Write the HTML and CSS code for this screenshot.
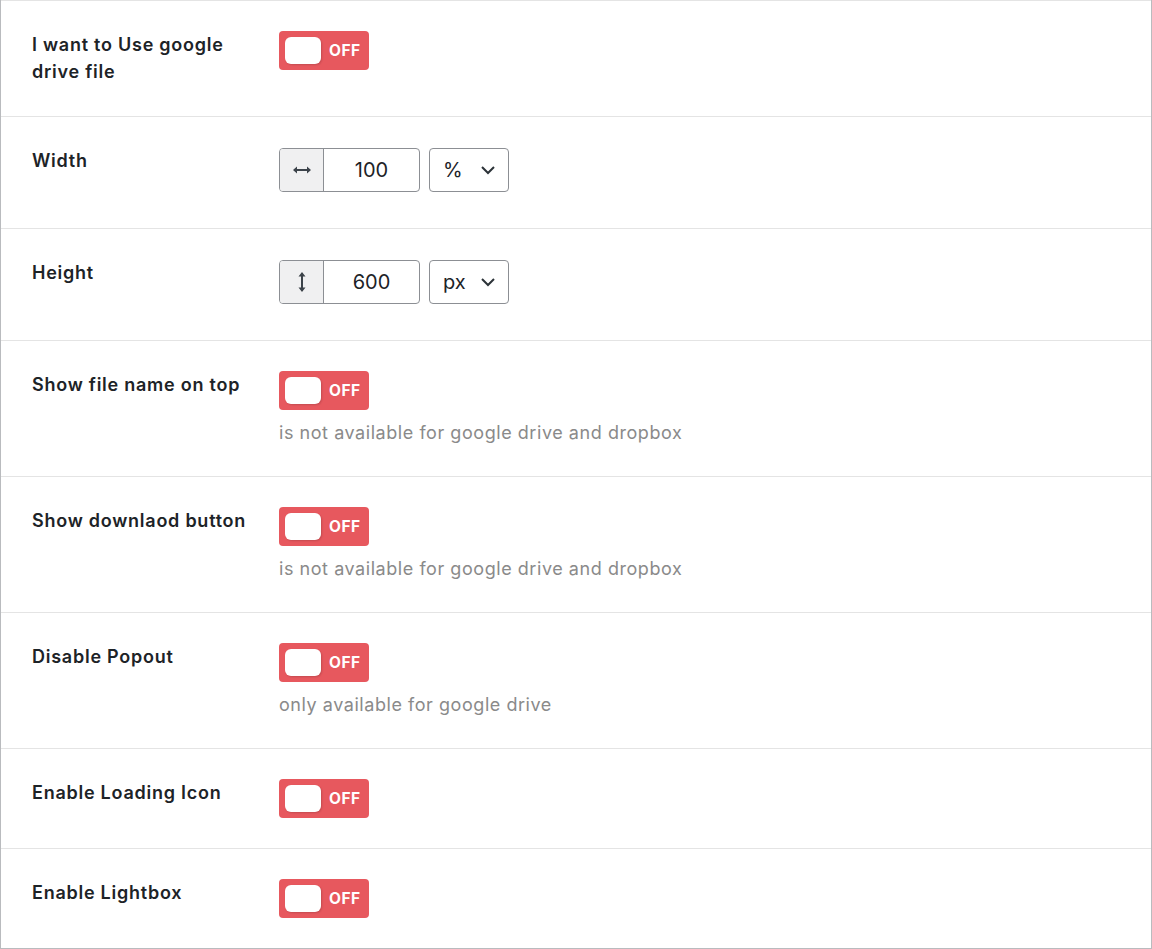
FILE: index.html
```html
<!DOCTYPE html>
<html>
<head>
<meta charset="utf-8">
<link rel="stylesheet" href="styles.css">
</head>
<body>
<div class="panel">
  <div class="row">
    <div class="label">I want to Use google drive file</div>
    <div class="control"><span class="toggle"><span class="knob"></span><span class="state">OFF</span></span></div>
  </div>
  <div class="row">
    <div class="label">Width</div>
    <div class="control dims">
      <div class="group">
        <span class="addon"><svg width="20" height="10" viewBox="0 0 20 10"><path d="M3 5h14" stroke="#3c434a" stroke-width="2"/><path d="M1 5l4-3.5v7z M19 5l-4-3.5v7z" fill="#3c434a"/></svg></span>
        <span class="value">100</span>
      </div>
      <div class="select"><span>%</span><svg class="chev" width="16" height="10" viewBox="0 0 16 10"><path d="M2 2l6 6 6-6" fill="none" stroke="#2c3338" stroke-width="2"/></svg></div>
    </div>
  </div>
  <div class="row">
    <div class="label">Height</div>
    <div class="control dims">
      <div class="group">
        <span class="addon"><svg width="10" height="22" viewBox="0 0 10 22"><path d="M5 3v16" stroke="#3c434a" stroke-width="2"/><path d="M5 1l3.5 4.5h-7z M5 21l3.5-4.5h-7z" fill="#3c434a"/></svg></span>
        <span class="value">600</span>
      </div>
      <div class="select"><span>px</span><svg class="chev" width="16" height="10" viewBox="0 0 16 10"><path d="M2 2l6 6 6-6" fill="none" stroke="#2c3338" stroke-width="2"/></svg></div>
    </div>
  </div>
  <div class="row">
    <div class="label">Show file name on top</div>
    <div class="control"><span class="toggle"><span class="knob"></span><span class="state">OFF</span></span>
      <p class="desc">is not available for google drive and dropbox</p></div>
  </div>
  <div class="row">
    <div class="label">Show downlaod button</div>
    <div class="control"><span class="toggle"><span class="knob"></span><span class="state">OFF</span></span>
      <p class="desc">is not available for google drive and dropbox</p></div>
  </div>
  <div class="row">
    <div class="label">Disable Popout</div>
    <div class="control"><span class="toggle"><span class="knob"></span><span class="state">OFF</span></span>
      <p class="desc">only available for google drive</p></div>
  </div>
  <div class="row">
    <div class="label">Enable Loading Icon</div>
    <div class="control"><span class="toggle"><span class="knob"></span><span class="state">OFF</span></span></div>
  </div>
  <div class="row">
    <div class="label">Enable Lightbox</div>
    <div class="control"><span class="toggle"><span class="knob"></span><span class="state">OFF</span></span></div>
  </div>
</div>
</body>
</html>
```

FILE: styles.css
```css
html, body { margin: 0; padding: 0; background: #fff; }
body { font-family: Inter, "Noto Sans", sans-serif; color: #1d2327; }
.panel {
  width: 1152px;
  box-sizing: border-box;
  border-left: 1px solid #b9bbbe;
  border-right: 1px solid #b9bbbe;
  border-bottom: 1px solid #b9bbbe;
}
.row {
  display: grid;
  grid-template-columns: 247px 1fr;
  padding: 30px 0 30px 31px;
  border-top: 1px solid #e4e4e4;
}
.row:first-child { padding-bottom: 31px; }
.label {
  font-size: 18px;
  font-weight: 600;
  letter-spacing: 0.75px;
  line-height: 27px;
  width: 236px;
  color: #1d2327;
}
.toggle {
  display: flex;
  align-items: center;
  width: 90px;
  height: 39px;
  box-sizing: border-box;
  padding-left: 6px;
  background: #e7585e;
  border-radius: 4px;
}
.knob {
  width: 36px;
  height: 27px;
  background: #fff;
  border-radius: 6px;
  box-shadow: 1px 1px 2px rgba(0,0,0,0.15);
}
.state {
  margin-left: 8px;
  color: #fff;
  font-size: 15.5px;
  font-weight: 700;
  letter-spacing: 0.5px;
}
.desc {
  margin: 10px 0 0;
  font-size: 18px;
  letter-spacing: 0.55px;
  line-height: 26px;
  color: #8a8a8a;
}
.dims {
  display: flex;
  gap: 9px;
  align-items: flex-start;
  padding-top: 1px;
  padding-bottom: 6px;
}
.group {
  display: flex;
  width: 141px;
  height: 44px;
  box-sizing: border-box;
  border: 1px solid #8c8f94;
  border-radius: 4px;
  overflow: hidden;
}
.addon {
  width: 43px;
  background: #f0f0f1;
  border-right: 1px solid #8c8f94;
  display: flex;
  align-items: center;
  justify-content: center;
}
.value {
  flex: 1;
  display: flex;
  align-items: center;
  justify-content: center;
  font-size: 20px;
  color: #1d2327;
}
.select {
  width: 80px;
  height: 44px;
  box-sizing: border-box;
  border: 1px solid #8c8f94;
  border-radius: 4px;
  display: flex;
  align-items: center;
  justify-content: space-between;
  padding: 0 12px 0 13px;
  font-size: 20px;
  color: #1d2327;
}
.chev { display: block; }
```
